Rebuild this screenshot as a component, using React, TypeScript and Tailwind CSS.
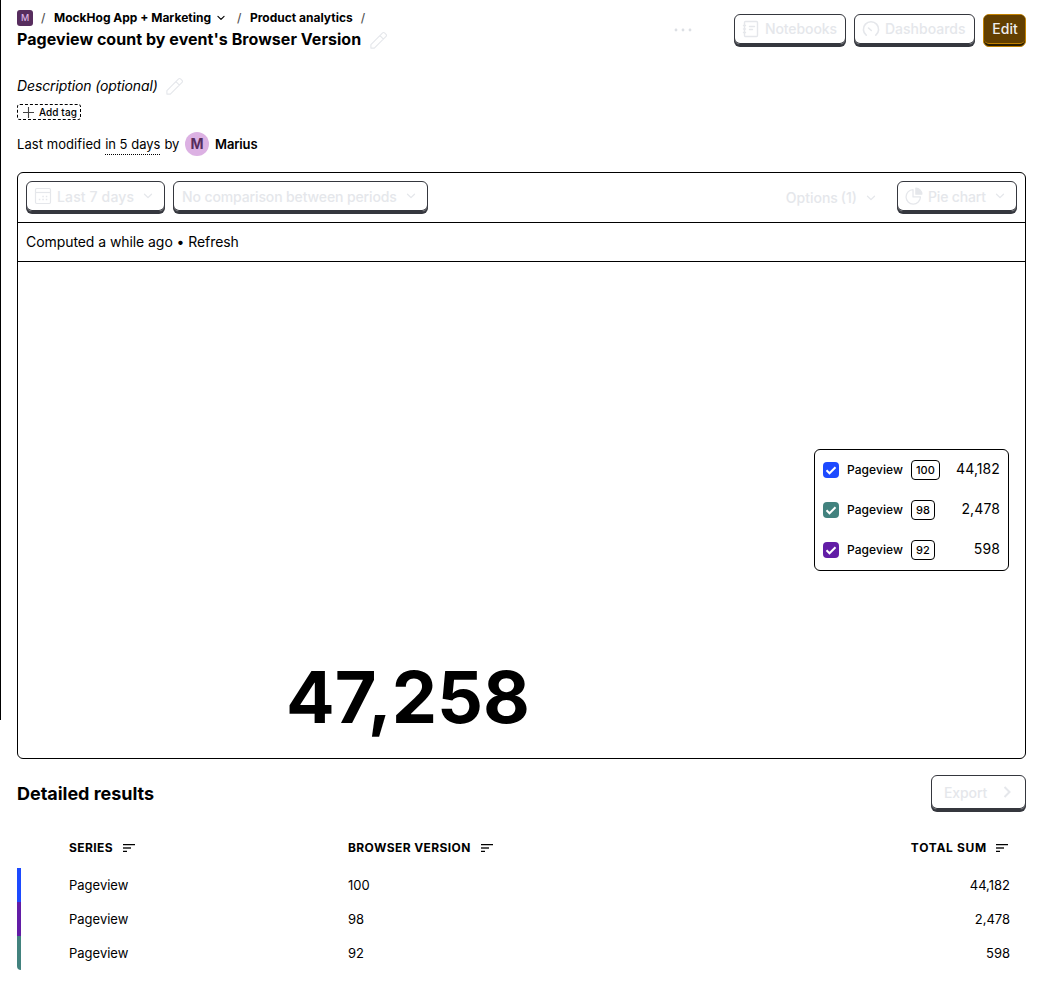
import React from "react";

const Chevron = ({ className = "", size = 16 }: { className?: string; size?: number }) => (
  <svg className={"shrink-0 " + className} width={size} height={size} viewBox="0 0 16 16" fill="none" stroke="currentColor" strokeWidth="1.3" strokeLinecap="round" strokeLinejoin="round">
    <path d="M4.5 6.2l3.5 3.4 3.5-3.4" />
  </svg>
);

const Pencil = () => (
  <svg width="18" height="18" viewBox="0 0 24 24" fill="none" stroke="currentColor" strokeWidth="1.5" strokeLinejoin="round" className="shrink-0 text-[#e5e7eb]">
    <path d="M1.2 22.8v-4.6L16.8 2.6a1.8 1.8 0 0 1 2.6 0l2 2a1.8 1.8 0 0 1 0 2.6L5.8 22.8zM13.3 6.1l4.6 4.6" />
  </svg>
);

const NotebookIcon = () => (
  <svg width="18" height="18" viewBox="0 0 18 18" fill="none" stroke="currentColor" strokeWidth="1.4" strokeLinecap="round" className="-ml-px mr-px shrink-0">
    <rect x="2.5" y="1.5" width="13" height="15" rx="1" />
    <path d="M1.5 5.5h2M1.5 9h2M1.5 12.5h2M7.5 6.5h5M7.5 9.5h3" />
  </svg>
);

const GaugeIcon = () => (
  <svg width="18" height="18" viewBox="0 0 18 18" fill="none" stroke="currentColor" strokeWidth="1.6" strokeLinecap="round" strokeLinejoin="round" className="-ml-px mr-px shrink-0">
    <path d="M4.2 15.2a7.6 7.6 0 1 1 9.6 0M9.3 10.5L6.5 8" />
  </svg>
);

const CalendarIcon = () => (
  <svg width="18" height="18" viewBox="0 0 18 18" fill="none" stroke="currentColor" strokeWidth="1.2" className="-ml-px mb-px mr-px shrink-0">
    <rect x="1.5" y="1.5" width="15" height="15" rx="1.2" />
    <path d="M1.5 5.5h15" />
    <path d="M8.3 9.5h1.5M11.8 9.5h1.5M4.8 12.5h1.5M8.3 12.5h1.5M11.8 12.5h1.5" strokeWidth="1.5" />
  </svg>
);

const PieIcon = () => (
  <svg width="18" height="18" viewBox="0 0 24 24" fill="none" stroke="currentColor" strokeWidth="1.7" strokeLinejoin="round" className="-ml-px mb-px mr-px shrink-0">
    <path d="M10.7 3.5a9.6 9.6 0 1 0 9.9 9.8h-9.9z" />
    <path d="M14.5 1.5a8.5 8.5 0 0 1 8 8h-8z" fill="currentColor" />
  </svg>
);

const SortIcon = () => (
  <svg width="13" height="9" viewBox="0 0 13 9" className="mb-px shrink-0">
    <path d="M0 1h12v1.3H0zM0 7.7h4V9H0z" fill="#000" />
    <path d="M0 4h8v2H0z" fill="#555" />
  </svg>
);

const Button = ({ children, className }: { children: React.ReactNode; className: string }) => (
  <button className={"flex shrink-0 items-center whitespace-nowrap rounded-[6px] border border-[#35373e] bg-white text-sm font-medium text-[#e5e7eb] shadow-[inset_0_-1px_0_#35373e,0_2px_0_#35373e] " + className}>
    {children}
  </button>
);

const legend = [
  { color: "bg-[#1d4aff]", version: "100", total: "44,182" },
  { color: "bg-[#42827e]", version: "98", total: "2,478" },
  { color: "bg-[#621da6]", version: "92", total: "598" },
];

const rows = [
  { color: "bg-[#1d4aff]", version: "100", total: "44,182" },
  { color: "bg-[#621da6]", version: "98", total: "2,478" },
  { color: "bg-[#42827e] rounded-bl-[4px]", version: "92", total: "598" },
];

export default function App() {
  return (
    <div className="flex h-[986px] w-[1042px] overflow-hidden bg-white font-[Inter,sans-serif] text-black">
      <aside className="h-[720px] w-px shrink-0 bg-black" />
      <main className="flex w-[1041px] flex-col px-4">
        <header className="flex h-[70px] items-start">
          <div className="flex flex-1 flex-col pt-[10px]">
            <nav className="flex h-4 items-center text-xs font-bold">
              <span className="flex size-4 items-center justify-center rounded-[3px] bg-[#572d5e] text-[9px] font-medium text-[#dcb1e3]">M</span>
              <span className="ml-2 mr-2 w-[5px] font-medium text-[#555]">/</span>
              <span>MockHog App + Marketing</span>
              <Chevron size={14} className="ml-[3px] mr-[9px]" />
              <span className="w-[5px] font-medium text-[#555]">/</span>
              <span className="ml-2">Product analytics</span>
              <span className="ml-2 font-medium text-[#555]">/</span>
            </nav>
            <div className="flex h-7 items-center gap-[9px]">
              <h1 className="-mt-0.5 text-base font-bold tracking-[0.05px]">Pageview count by event's Browser Version</h1>
              <Pencil />
            </div>
          </div>
          <div className="flex items-start gap-2 pt-[14px]">
            <svg width="18" height="4" viewBox="0 0 18 4" className="mr-[34px] mt-[14px] fill-[#dcdfe4]">
              <circle cx="2" cy="2" r="1.4" />
              <circle cx="9" cy="2" r="1.4" />
              <circle cx="16" cy="2" r="1.4" />
            </svg>
            <Button className="h-[31px] w-28 gap-1 pb-px pl-2 tracking-[-0.1px]"><NotebookIcon />Notebooks</Button>
            <Button className="h-[31px] w-[121px] gap-1 pb-px pl-2"><GaugeIcon />Dashboards</Button>
            <button className="flex h-[33px] w-[43px] items-start justify-center rounded-[6px] border border-[#c28100] bg-[#2b1d00]">
              <span className="flex h-[29px] w-full items-center justify-center rounded-[5px] border-b border-[#c28100] bg-[#633f00] pl-px text-sm font-medium text-[#eee]">Edit</span>
            </button>
          </div>
        </header>
        <div className="flex h-8 items-center gap-2 text-sm italic tracking-[-0.12px]">
          <span>Description (optional)</span>
          <Pencil />
        </div>
        <div className="flex h-[22px] items-center">
          <button className="mt-[-2px] flex h-4 w-16 items-center gap-1 whitespace-nowrap rounded-[3px] border border-dashed border-black pl-1 text-[10px] font-medium tracking-[0.08px]">
            <svg width="13" height="13" viewBox="0 0 13 13" stroke="#444" strokeWidth="1.1" className="shrink-0"><path d="M6.5 1v11M1 6.5h11" /></svg>
            Add tag
          </button>
        </div>
        <div className="flex h-12 items-center pb-2 text-[13px]">
          <span className="pt-0.5 tracking-[0.07px]">Last modified</span>
          <span className="ml-1 border-b border-dotted border-black pt-[2px] leading-[19px]">in 5 days</span>
          <span className="ml-1 pt-0.5 tracking-[-0.2px]">by</span>
          <span className="ml-1.5 flex size-6 items-center justify-center rounded-full bg-[#dcb1e3] text-sm font-bold text-[#572d5e]">M</span>
          <span className="ml-1.5 pt-0.5 font-semibold tracking-[-0.15px]">Marius</span>
        </div>
        <section className="flex h-[587px] shrink-0 flex-col rounded-[6px] border border-black">
          <div className="flex h-[50px] shrink-0 items-start gap-2 border-b border-black px-2 pt-2">
            <Button className="h-[31px] w-[139px] pl-2"><CalendarIcon /><span className="ml-1 tracking-[0.14px]">Last 7 days</span><Chevron className="mb-0.5 ml-1.5" /></Button>
            <Button className="h-[31px] w-[255px] pl-2 tracking-[-0.12px]">No comparison between periods<Chevron className="mb-0.5 ml-1.5" /></Button>
            <div className="ml-auto mr-[10px] flex h-[33px] items-center text-sm font-medium text-[#e5e7eb]"><span>Options</span><span className="ml-[3px]">(1)</span><Chevron className="ml-1.5" /></div>
            <Button className="h-[31px] w-[120px] pl-2"><PieIcon /><span className="ml-1 tracking-[-0.15px]">Pie chart</span><Chevron className="mb-0.5 ml-1.5" /></Button>
          </div>
          <div className="flex h-[39px] shrink-0 items-center border-b border-black px-2 text-sm tracking-[-0.07px]">Computed a while ago • Refresh</div>
          <div className="flex flex-1">
            <div className="flex w-[780px] items-end justify-center pb-[21px]">
              <div className="text-[72px] font-bold leading-[80px]">47,258</div>
            </div>
            <div className="ml-4 mt-[187px] flex h-[122px] w-[195px] flex-col rounded-[6px] border border-black px-2">
              {legend.map((item) => (
                <div key={item.version} className="flex h-10 items-center">
                  <span className={"flex size-4 items-center justify-center rounded-[4px] " + item.color}>
                    <svg width="16" height="16" viewBox="0 0 16 16" fill="none" stroke="white" strokeWidth="2"><path d="M3.5 8.3l3 3 6-6" /></svg>
                  </span>
                  <span className="ml-2 w-14 text-xs font-medium tracking-[0.07px]">Pageview</span>
                  <span className="ml-2 flex h-5 items-center rounded-[4px] border border-black px-1 text-[11px] font-medium">{item.version}</span>
                  <span className="ml-auto pb-0.5 text-sm tracking-[0.1px]">{item.total}</span>
                </div>
              ))}
            </div>
          </div>
        </section>
        <div className="mt-4 flex h-[37px] shrink-0 items-start justify-between">
          <h2 className="text-lg font-bold leading-[37px] tracking-[-0.03px]">Detailed results</h2>
          <Button className="h-[35px] w-[95px] pl-3"><span className="tracking-[-0.1px]">Export</span>
            <svg width="12" height="12" viewBox="0 0 12 12" fill="none" stroke="currentColor" strokeWidth="2" className="mb-0.5 ml-[14px]"><path d="M3.5 1l5 5-5 5" /></svg>
          </Button>
        </div>
        <div className="mt-4 flex h-10 shrink-0 items-center text-xs font-bold tracking-[0.4px]">
          <div className="flex w-[331px] items-center gap-[10px] pl-[52px]">SERIES<SortIcon /></div>
          <div className="flex flex-1 items-center gap-[10px]">BROWSER VERSION<SortIcon /></div>
          <div className="flex items-center gap-[9px] pr-[17px] tracking-[0.7px]">TOTAL SUM<SortIcon /></div>
        </div>
        {rows.map((row) => (
          <div key={row.version} className="flex h-[34px] shrink-0 items-center text-[13px]">
            <span className={"h-[34px] w-1 " + row.color} />
            <span className="w-[327px] pl-12 pt-0.5">Pageview</span>
            <span className="flex-1 pt-0.5">{row.version}</span>
            <span className="pr-4 pt-0.5">{row.total}</span>
          </div>
        ))}
      </main>
    </div>
  );
}
